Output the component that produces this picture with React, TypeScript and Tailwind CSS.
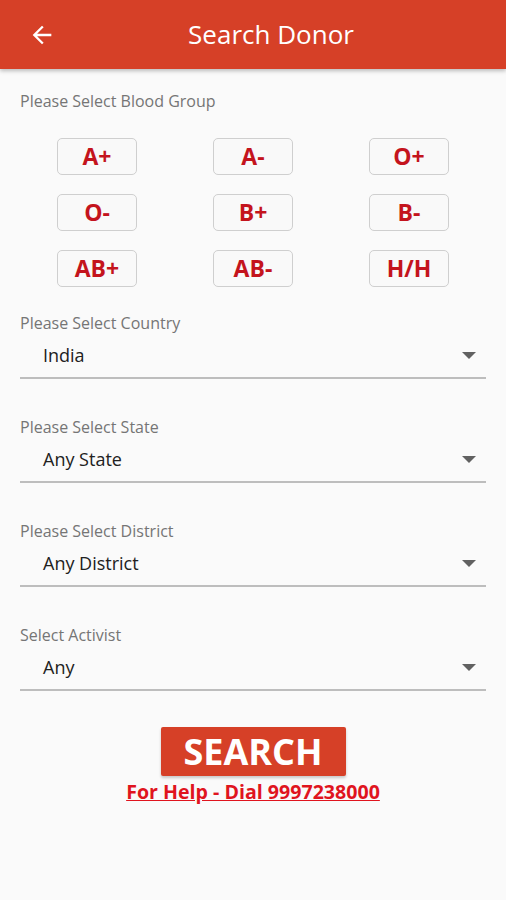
import React from 'react';

const groups = ['A+', 'A-', 'O+', 'O-', 'B+', 'B-', 'AB+', 'AB-', 'H/H'];

const selects = [
  { label: 'Please Select Country', value: 'India' },
  { label: 'Please Select State', value: 'Any State' },
  { label: 'Please Select District', value: 'Any District' },
  { label: 'Select Activist', value: 'Any' },
];

const SelectField: React.FC<{ label: string; value: string }> = ({ label, value }) => {
  return (
    <div className="h-[104px] pt-[11px]">
      <p className="text-[16px] leading-[22px] text-[#757575]">{label}</p>
      <div className="flex items-center justify-between h-[43px] pl-[23px] pr-[10px]">
        <span className="text-[18px] text-[#212121]">{value}</span>
        <svg width="14" height="8" viewBox="0 0 14 8">
          <path d="M0 0 L14 0 L7 7 Z" fill="#616161" />
        </svg>
      </div>
      <div className="h-[2px] bg-[#bdbdbd]" />
    </div>
  );
};

const App: React.FC = () => {
  return (
    <div className="w-[506px] h-[900px] bg-[#fafafa] font-['Open_Sans',sans-serif]">
      <header className="h-[69px] bg-[#d64027] flex items-center relative shadow-[0_2px_4px_rgba(0,0,0,0.25)]">
        <svg className="absolute left-[28px] top-[21px]" width="28" height="28" viewBox="0 0 24 24">
          <path d="M20 11H7.83l5.59-5.59L12 4l-8 8 8 8 1.41-1.41L7.83 13H20v-2z" fill="#fff" />
        </svg>
        <h1 className="w-full text-center pl-[36px] text-white text-[26px]">Search Donor</h1>
      </header>

      <div className="px-[20px]">
        <p className="pt-[21px] text-[16px] leading-[22px] text-[#757575]">Please Select Blood Group</p>

        <div className="grid grid-cols-3 gap-y-[19px] mt-[26px] px-[37px] justify-between">
          {groups.map((g, i) => (
            <div
              key={g}
              className={`w-[80px] h-[37px] rounded-[5px] border border-[#cfcfcf] bg-[#f9f9f9] flex items-center justify-center text-[#c4141d] text-[23px] font-bold ${
                i % 3 === 0 ? 'justify-self-start' : i % 3 === 1 ? 'justify-self-center' : 'justify-self-end'
              }`}
            >
              {g}
            </div>
          ))}
        </div>

        <div className="mt-[14px]">
          {selects.map((s) => (
            <SelectField key={s.label} label={s.label} value={s.value} />
          ))}
        </div>

        <div className="flex flex-col items-center mt-[10px]">
          <button className="w-[185px] h-[49px] bg-[#d64027] rounded-[2px] text-white text-[36px] font-bold leading-none shadow-[0_2px_3px_rgba(0,0,0,0.2)]">
            SEARCH
          </button>
          <a className="mt-[1px] text-[#e0141e] text-[19.6px] font-bold underline">For Help - Dial 9997238000</a>
        </div>
      </div>
    </div>
  );
};

export default App;
